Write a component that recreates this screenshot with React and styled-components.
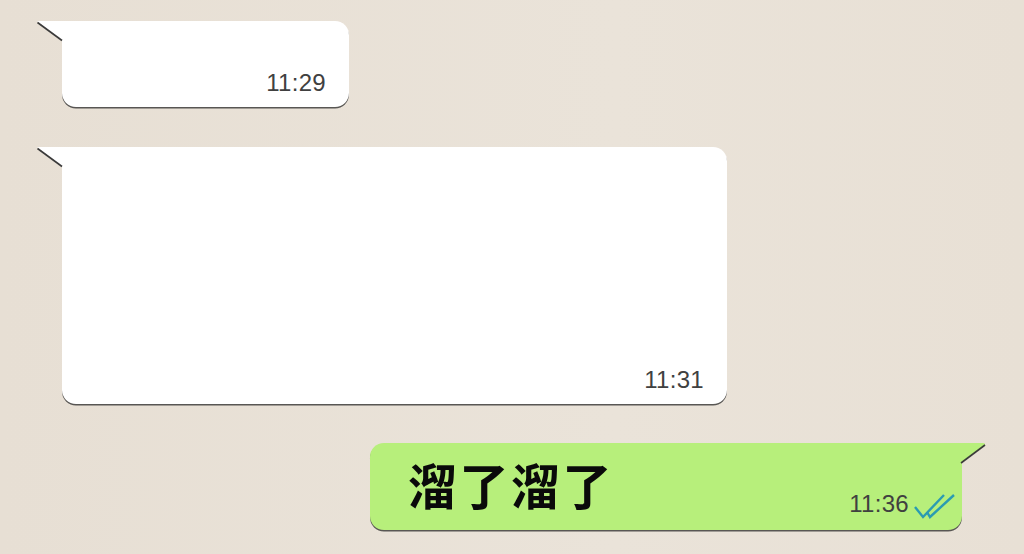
import React from "react";
import styled, { createGlobalStyle } from "styled-components";

const Global = createGlobalStyle`
  html, body { margin: 0; padding: 0; }
  body {
    background: #e8e0d6;
    font-family: "Liberation Sans", Arial, sans-serif;
  }
`;

const Page = styled.div`
  width: 1024px;
  height: 554px;
  box-sizing: border-box;
  padding: 21px 62px 0 62px;
  display: flex;
  flex-direction: column;
  align-items: flex-start;
  background: linear-gradient(90deg, #e7dfd4 0%, #eae3d9 60%, #e8e0d5 100%);
  overflow: hidden;
`;

const Bubble = styled.div`
  position: relative;
  box-sizing: border-box;
  width: ${(p) => p.$w}px;
  height: ${(p) => p.$h}px;
  margin-top: ${(p) => p.$mt || 0}px;
  background: ${(p) => (p.$out ? "#b7ef7b" : "#ffffff")};
  border-radius: ${(p) => (p.$out ? "14px 0 14px 14px" : "0 14px 14px 14px")};
  box-shadow: 0 1.5px 0.6px rgba(40, 40, 40, 0.75);
  align-self: ${(p) => (p.$out ? "flex-end" : "flex-start")};
  display: flex;
  align-items: flex-end;
  justify-content: ${(p) => (p.$out ? "space-between" : "flex-end")};
  padding: ${(p) => (p.$out ? "0 6px 14px 38px" : "0 23px 12px 0")};
`;

const Tail = styled.svg`
  position: absolute;
  top: 0;
  ${(p) => (p.$out ? "right: -24px;" : "left: -25px;")}
  width: 25px;
  height: 21px;
  overflow: visible;
`;

const Time = styled.span`
  font-family: "Liberation Sans", Arial, sans-serif;
  font-size: 24px;
  line-height: 24px;
  color: #404040;
  letter-spacing: 0.3px;
`;

const Text = styled.span`
  align-self: center;
  font-family: "Noto Sans CJK SC", "Noto Sans", sans-serif;
  font-weight: 600;
  font-size: 49px;
  line-height: 60px;
  letter-spacing: 2.5px;
  color: #0a0a0a;
  margin-top: 8px;
`;

const Meta = styled.div`
  display: flex;
  align-items: flex-end;
  gap: 5px;
`;

const Ticks = styled.svg`
  width: 42px;
  height: 26px;
  margin-bottom: -4px;
`;

function LeftTail() {
  return (
    <Tail viewBox="0 0 25 21">
      <polygon points="0,0 26,0 26,20" fill="#ffffff" />
      <line x1="0.5" y1="1.5" x2="25" y2="19.5" stroke="#3a3a3a" strokeWidth="1.6" />
    </Tail>
  );
}

function RightTail() {
  return (
    <Tail $out viewBox="0 0 25 21">
      <path d="M-1,0 L22,0 Q24.5,0 24,2 L0,20 L-1,20 Z" fill="#b7ef7b" />
      <line x1="24" y1="2" x2="0" y2="20" stroke="#3a3a3a" strokeWidth="1.6" />
    </Tail>
  );
}

export default function App() {
  return (
    <>
      <Global />
      <Page>
        <Bubble $w={287} $h={86}>
          <LeftTail />
          <Time>11:29</Time>
        </Bubble>
        <Bubble $w={665} $h={257} $mt={40}>
          <LeftTail />
          <Time>11:31</Time>
        </Bubble>
        <Bubble $out $w={592} $h={87} $mt={39}>
          <RightTail />
          <Text>溜了溜了</Text>
          <Meta>
            <Time>11:36</Time>
            <Ticks viewBox="0 0 42 26">
              <polyline points="1,13 9,23 30,1" fill="none" stroke="#2a9bb2" strokeWidth="2.4" strokeLinejoin="miter" />
              <polyline points="13,18 16,23 40,1" fill="none" stroke="#2a9bb2" strokeWidth="2.4" strokeLinejoin="miter" />
            </Ticks>
          </Meta>
        </Bubble>
      </Page>
    </>
  );
}
